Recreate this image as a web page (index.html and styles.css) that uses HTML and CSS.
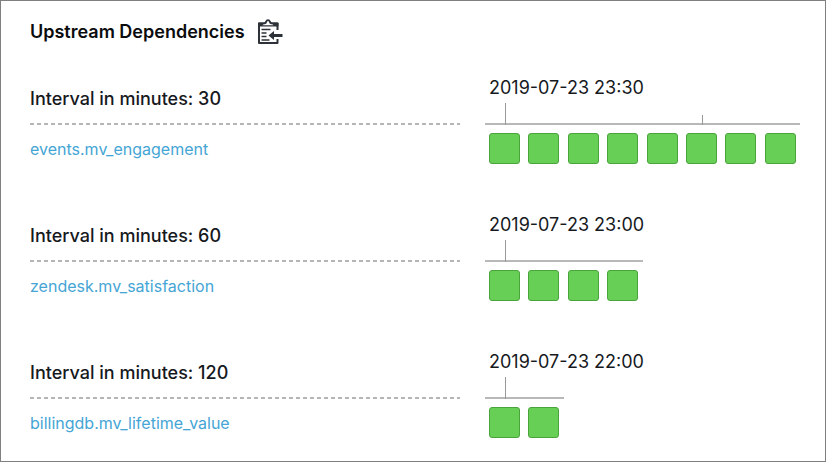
FILE: index.html
```html
<!DOCTYPE html>
<html lang="en">
<head>
<meta charset="utf-8">
<title>Upstream Dependencies</title>
<link rel="stylesheet" href="styles.css">
</head>
<body>
<main class="panel">
  <header class="header">
    <h1 class="title">Upstream Dependencies</h1>
    <svg class="icon" viewBox="0 0 26 26" aria-hidden="true">
      <path d="M20.500 11V4.500H2V24H20.500V20" fill="none" stroke="#2d3238" stroke-width="2" stroke-linejoin="round"/>
      <path d="M1 4.500Q1 3.500 2 3.500H6.500Q8 3.500 8.300 2.200Q9 0.300 11 0.300T13.700 2.200Q14 3.500 15.500 3.500H20.500Q21.500 3.500 21.500 4.500V7.500H1Z" fill="#2d3238"/>
      <path d="M5.500 6.300Q5.800 5.400 7.500 5.300Q9.600 5.200 10 3.200Q10.300 2 11 2T12 3.200Q12.400 5.200 14.500 5.300Q16.200 5.400 16.500 6.300Z" fill="#fff"/>
      <path d="M4.500 10.500H13.500M4.500 14H9.500M4.500 17.500H9.500M4.500 21H12.500" stroke="#2d3238" stroke-width="1.500"/>
      <path d="M11.500 16.500L17 12V15H25.500V18H17V21Z" fill="#2d3238"/>
    </svg>
  </header>

  <section class="group">
    <h2 class="interval">Interval in minutes: 30</h2>
    <div class="when"><time>2019-07-23 23:30</time></div>
    <div class="name"><a class="link" href="#engagement">events.mv_engagement</a></div>
    <div class="runs">
      <span class="cell first"><i class="box"></i></span><span class="cell"><i class="box"></i></span><span class="cell"><i class="box"></i></span><span class="cell"><i class="box"></i></span><span class="cell"><i class="box"></i></span><span class="cell minor"><i class="box"></i></span><span class="cell"><i class="box"></i></span><span class="cell"><i class="box"></i></span>
    </div>
  </section>

  <section class="group">
    <h2 class="interval">Interval in minutes: 60</h2>
    <div class="when"><time>2019-07-23 23:00</time></div>
    <div class="name"><a class="link" href="#satisfaction">zendesk.mv_satisfaction</a></div>
    <div class="runs">
      <span class="cell first"><i class="box"></i></span><span class="cell"><i class="box"></i></span><span class="cell"><i class="box"></i></span><span class="cell"><i class="box"></i></span>
    </div>
  </section>

  <section class="group">
    <h2 class="interval">Interval in minutes: 120</h2>
    <div class="when"><time>2019-07-23 22:00</time></div>
    <div class="name"><a class="link" href="#lifetime">billingdb.mv_lifetime_value</a></div>
    <div class="runs">
      <span class="cell first"><i class="box"></i></span><span class="cell"><i class="box"></i></span>
    </div>
  </section>
</main>
</body>
</html>
```

FILE: styles.css
```css
* { box-sizing: border-box; }

body {
  margin: 0;
  background: #fff;
  color: #16191d;
  font-family: Inter, "Liberation Sans", sans-serif;
}

.panel {
  min-height: 100vh;
  padding: 16px 25px 0 29px;
  border: 1px solid #808080;
}

.header {
  display: flex;
  align-items: center;
  gap: 12px;
  margin-bottom: 29px;
}

.title {
  margin: 0;
  color: #0b0c0e;
  font-size: 18px;
  font-weight: 600;
  line-height: 30px;
}

.icon { width: 26px; height: 26px; }

.group {
  display: grid;
  grid-template-columns: 430fr 315fr;
  grid-template-rows: 49px 41px;
  column-gap: 25px;
}

.group + .group { margin-top: 47px; }

/* Dashed rule under each interval label */
.interval {
  margin: 0;
  padding-top: 11px;
  background: repeating-linear-gradient(to right, #b5b5b5 0 4px, transparent 4px 7px) left bottom / 100% 2px no-repeat;
  font-size: 18px;
  font-weight: 500;
  line-height: 24px;
}

.when {
  padding-left: 4px;
  font-size: 18px;
  line-height: 24px;
}

.name { padding-top: 12px; }

.link {
  color: #45a5d5;
  font-size: 16px;
  line-height: 24px;
  text-decoration: none;
}

.runs {
  display: grid;
  grid-template-columns: repeat(8, 1fr);
}

/* Adjacent cell shadows join into the time axis */
.cell {
  position: relative;
  padding: 8px 0 0 4px;
  box-shadow: 0 -2px #b8b8b8;
}

.first::before,
.minor::before {
  content: "";
  position: absolute;
  bottom: 100%;
  left: 20px;
  width: 1px;
  height: 22px;
  background: #999;
}

.minor::before { height: 10px; }

.box {
  display: block;
  width: 31px;
  height: 31px;
  border: 1px solid #4aa43c;
  border-radius: 3px;
  background: #67cf56;
}
```
